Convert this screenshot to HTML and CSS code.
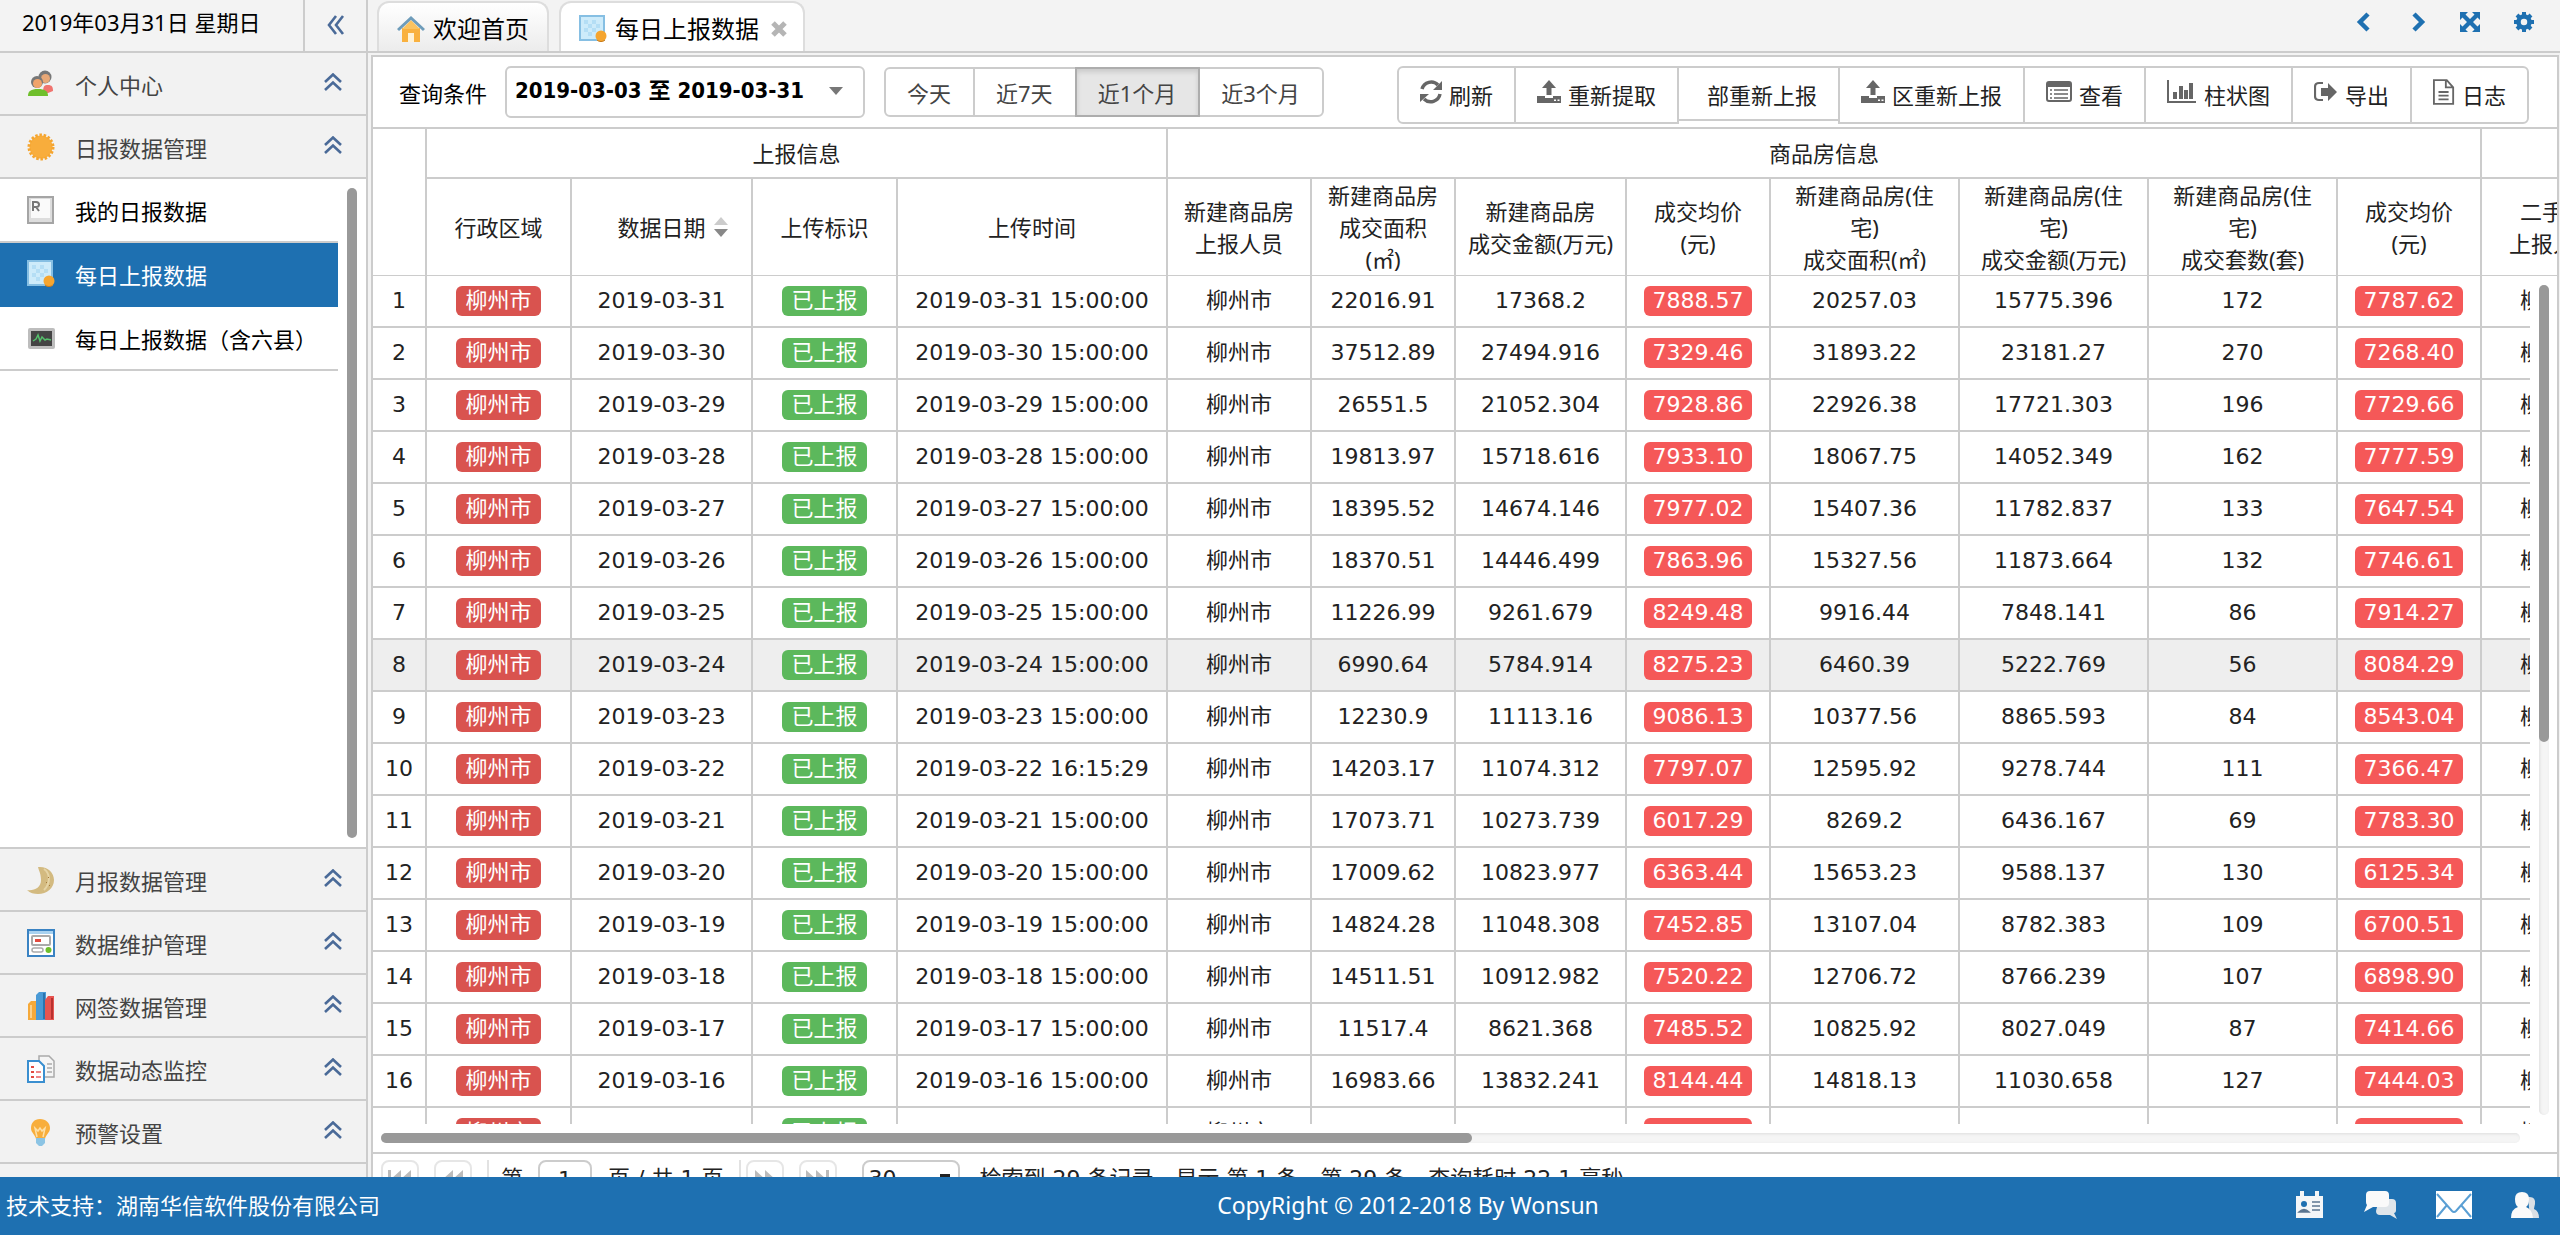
FILE: index.html
```html
<!DOCTYPE html>
<html lang="zh-CN">
<head>
    <meta charset="utf-8">
    <title>每日上报数据</title>
    <link rel="stylesheet" href="styles.css">
</head>
<body>
    <!-- shared icons -->
    <svg class="defs" aria-hidden="true">
        <symbol id="i-up" viewBox="0 0 18 18"><path d="M1 9 9 1.500 17 9M1 17 9 9.500 17 17" fill="none" stroke="#4a6a98" stroke-width="2.600"/></symbol>
        <symbol id="i-grid" viewBox="0 0 28 28"><path d="M1 1h24v24H1z" fill="#cdebfa" stroke="#86bfe3" stroke-width="2"/><path d="M5 5h4v4H5zm8 0h4v4h-4zM9 9h4v4H9zm8 0h4v4h-4zM5 13h4v4H5zm8 0h4v4h-4zM9 17h4v4H9z" fill="#b4def5"/><circle cx="22" cy="21" r="5.500" fill="#f5a52f"/><path d="M18 25c2 2 6 2 8 0" stroke="#c87a18" fill="none"/></symbol>
        <symbol id="i-upload" viewBox="0 0 24 24"><path d="M12 0 5 8h4.500v7h5V8H19zM0 16h8v2h8v-2h8v7H0z" fill="#666"/><path d="M17 19.500h2v1.500h-2zm3.500 0h2v1.500h-2z" fill="#fff"/></symbol>
    </svg>

    <div class="main">
        <aside class="sidebar">
            <div class="side-top">
                <span class="date">2019年03月31日 星期日</span>
                <button class="collapse" aria-label="收起">
                    <svg width="18" height="20" viewBox="0 0 18 20"><path d="M9 1 2 10l7 9M16 1l-7 9 7 9" fill="none" stroke="#4a6a98" stroke-width="2.600"/></svg>
                </button>
            </div>
            <button class="acc">
                <svg class="ico" viewBox="0 0 28 28"><path d="M16 24c0-8 1-9 5-9 4 0 5 2 5 6l-5 2z" fill="#f0746f"/><circle cx="18" cy="7" r="6.500" fill="#777"/><circle cx="18.500" cy="8.500" r="4.500" fill="#e8a877"/><circle cx="10" cy="12" r="6" fill="#777"/><circle cx="10.500" cy="13.500" r="4.500" fill="#f0a36b"/><path d="M1 26c0-5 3-7 10-7s10 2 10 7z" fill="#6fbf2c"/></svg>
                <span>个人中心</span><svg class="chev"><use href="#i-up"/></svg>
            </button>
            <button class="acc">
                <svg class="ico" viewBox="0 0 28 28"><circle cx="14" cy="14" r="11.500" fill="#f8ad3c"/><circle cx="14" cy="14" r="12" fill="none" stroke="#f5a52f" stroke-width="3" stroke-dasharray="2.500 1.700"/></svg>
                <span>日报数据管理</span><svg class="chev"><use href="#i-up"/></svg>
            </button>
            <div class="submenu">
                <nav>
                    <a href="#">
                        <svg class="ico" viewBox="0 0 28 28"><path d="M1 1h25v26H1z" fill="#ddd" stroke="#a5a5a5" stroke-width="2"/><path d="M4 3h19v19H4z" fill="#fafafa"/><path d="M6 15V6h3q3 0 3 2.500T9 11H6m3 0 3 4" fill="none" stroke="#777" stroke-width="2"/></svg>
                        <span>我的日报数据</span></a>
                    <a href="#" class="active"><svg class="ico"><use href="#i-grid"/></svg><span>每日上报数据</span></a>
                    <a href="#">
                        <svg class="ico" viewBox="0 0 28 28"><rect x="1" y="4" width="27" height="21" rx="2" fill="#bdbdbd"/><path d="M4 7h21v15H4z" fill="#444"/><path d="m6 17 3-2 2-4 2 6 2-4 3 3 2-1 4 1" fill="none" stroke="#55c06c" stroke-width="1.500"/></svg>
                        <span>每日上报数据（含六县）</span></a>
                </nav>
                <div class="side-scroll"></div>
            </div>
            <button class="acc">
                <svg class="ico" viewBox="0 0 28 28"><path d="M11 1c9-1 16 5 16 13S20 28 11 28c-4 0-8-1-11-4 7 1 14-2 14-10 0-6-2-9-3-13z" fill="#d3ba80"/><path d="M17 3c6 4 7 14 0 21" fill="none" stroke="#e6d4a5" stroke-width="2"/><path d="M21 11h1v1h-1zm-2 5h1v1h-1zm3 3h1v1h-1z" fill="#a3793a"/></svg>
                <span>月报数据管理</span><svg class="chev"><use href="#i-up"/></svg>
            </button>
            <button class="acc">
                <svg class="ico" viewBox="0 0 28 28"><path d="M1 1h26v26H1z" fill="#fff" stroke="#3a83c3" stroke-width="2"/><path d="M2 2h24v3H2z" fill="#a9d2f0"/><rect x="5" y="7" width="18" height="9" rx="1" fill="#fff" stroke="#aaa" stroke-width="2"/><path d="M8 10h6v3H8z" fill="#e24b40"/><rect x="5" y="19" width="11" height="4" rx="2" fill="#fff" stroke="#aaa" stroke-width="1.500"/><circle cx="21.500" cy="21" r="3" fill="#6fbf2c"/></svg>
                <span>数据维护管理</span><svg class="chev"><use href="#i-up"/></svg>
            </button>
            <button class="acc">
                <svg class="ico" viewBox="0 0 28 28"><path d="m1 12 3-3h6v19H1z" fill="#f5a93a"/><path d="m9 3 3-3h7v28H9z" fill="#4a9ad6"/><path d="M17 1v26" stroke="#2c74ae" stroke-width="2"/><path d="m18 8 3-4h6v24h-9z" fill="#e85450"/><path d="M25 6v21" stroke="#b8322f" stroke-width="2"/><path d="M4 13v13" stroke="#fbd08a" stroke-width="2"/></svg>
                <span>网签数据管理</span><svg class="chev"><use href="#i-up"/></svg>
            </button>
            <button class="acc">
                <svg class="ico" viewBox="0 0 28 28"><path d="M12 1h10l5 5v16H12z" fill="#f5f5f5" stroke="#aaa" stroke-width="1.500"/><path d="M20 9h5m-5 4h5m-5 4h5" stroke="#aaa" stroke-width="1.500"/><path d="M1 6h11l5 5v16H1z" fill="#fff" stroke="#3a8fd0" stroke-width="2"/><path d="M4 12h3m-3 5h3m-3 5h3" stroke="#e24b40" stroke-width="2"/><path d="M9 17h5m-5 5h5" stroke="#e88" stroke-width="2"/></svg>
                <span>数据动态监控</span><svg class="chev"><use href="#i-up"/></svg>
            </button>
            <button class="acc">
                <svg class="ico" viewBox="0 0 28 28"><path d="M13 1c6 0 10 4 10 9s-4 6-5 11H9C8 16 4 15 4 10s3-9 9-9z" fill="#f8ae3c"/><path d="m10 19-2-9 3 3 2-3 2 3 3-3-2 9" fill="none" stroke="#fde0a8" stroke-width="1.500"/><path d="M9 20h9v5l-3 3h-3l-3-3z" fill="#8cc4e4"/></svg>
                <span>预警设置</span><svg class="chev"><use href="#i-up"/></svg>
            </button>
            <div class="side-end"></div>
        </aside>

        <section class="content">
            <div class="tabs">
                <button class="tab">
                    <svg class="ico" viewBox="0 0 28 28"><path d="M5 13h18v14H5z" fill="#f9b13f"/><path d="m5 14 9-9 9 9z" fill="#fbc35f"/><path d="M1 15 14 3l13 12" fill="none" stroke="#6e9cba" stroke-width="3"/><path d="M11 18h6v9h-6z" fill="#fff2d5"/></svg>
                    <span>欢迎首页</span>
                </button>
                <button class="tab current">
                    <svg class="ico"><use href="#i-grid"/></svg>
                    <span>每日上报数据</span>
                    <svg class="close" width="16" height="16" viewBox="0 0 16 16"><path d="m2 2 12 12M14 2 2 14" stroke="#b5b5b5" stroke-width="5"/></svg>
                </button>
                <div class="tools">
                    <button aria-label="上一个"><svg width="14" height="20" viewBox="0 0 14 20"><path d="M12 2 4 10l8 8" fill="none" stroke="#1e70b1" stroke-width="4.500"/></svg></button>
                    <button aria-label="下一个"><svg width="14" height="20" viewBox="0 0 14 20"><path d="m2 2 8 8-8 8" fill="none" stroke="#1e70b1" stroke-width="4.500"/></svg></button>
                    <button aria-label="全屏"><svg width="20" height="20" viewBox="0 0 20 20"><path d="M0 0h8L5.500 2.500 10 7l4.500-4.500L12 0h8v8l-2.500-2.500L13 10l4.500 4.500L20 12v8h-8l2.500-2.500L10 13l-4.500 4.500L8 20H0v-8l2.500 2.500L7 10 2.500 5.500 0 8z" fill="#1e70b1"/></svg></button>
                    <button aria-label="设置"><svg width="20" height="20" viewBox="0 0 20 20"><circle cx="10" cy="10" r="5.500" fill="none" stroke="#1e70b1" stroke-width="4.500"/><path d="M10 0v4m0 12v4M0 10h4m12 0h4M3 3l3 3m8 8 3 3m0-14-3 3m-8 8-3 3" stroke="#1e70b1" stroke-width="4"/></svg></button>
                </div>
            </div>

            <div class="panel">
                <div class="toolbar">
                    <span class="lbl">查询条件</span>
                    <button class="range"><span>2019-03-03 至 2019-03-31</span><i class="caret"></i></button>
                    <div class="quick">
                        <button>今天</button>
                        <button>近7天</button>
                        <button class="on">近1个月</button>
                        <button>近3个月</button>
                    </div>
                    <div class="actions">
                        <button><svg width="22" height="24" viewBox="0 0 22 24"><path d="M2 9a9.500 9.500 0 0 1 16-4M20 14a9.500 9.500 0 0 1-16 5" fill="none" stroke="#666" stroke-width="3.500"/><path d="M22 1v9h-9zM0 22v-8h9z" fill="#666"/></svg>刷新</button>
                        <button><svg width="24" height="24"><use href="#i-upload"/></svg>重新提取</button>
                        <button class="noicon">部重新上报</button>
                        <button><svg width="24" height="24"><use href="#i-upload"/></svg>区重新上报</button>
                        <button><svg width="26" height="24" viewBox="0 0 26 24"><rect x="1" y="2" width="24" height="19" rx="2" fill="#fff" stroke="#666" stroke-width="2"/><path d="M1 2h24v5H1z" fill="#666"/><path d="M4 10h2m-2 4h2m-2 4h2M8 10h14M8 14h14M8 18h14" stroke="#666" stroke-width="1.700"/></svg>查看</button>
                        <button><svg width="30" height="24" viewBox="0 0 30 24"><path d="M1 0v22h28" fill="none" stroke="#666" stroke-width="2"/><path d="M6 12h4v7H6zm6-6h4v13h-4zm5 4h4v9h-4zm5-7h4v16h-4z" fill="#666"/></svg>柱状图</button>
                        <button><svg width="24" height="24" viewBox="0 0 24 24"><path d="M9 3H5Q1 3 1 7v9q0 4 4 4h4" fill="none" stroke="#666" stroke-width="2.200"/><path d="M14 3v5H7v8h7v5l9-9z" fill="#666"/></svg>导出</button>
                        <button><svg width="22" height="26" viewBox="0 0 24 28"><path d="M1 1h14l7 8v18H1zM14 1v8h8" fill="none" stroke="#666" stroke-width="2"/><path d="M6 14h11M6 18h11M6 22h11" stroke="#666" stroke-width="2"/></svg>日志</button>
                    </div>
                </div>

                <div class="head-wrap">
                    <table class="grid">
                        <colgroup class="cols"></colgroup>
                        <thead>
                            <tr class="group">
                                <th rowspan="2"></th>
                                <th colspan="4">上报信息</th>
                                <th colspan="8">商品房信息</th>
                                <th></th>
                            </tr>
                            <tr class="names">
                                <th>行政区域</th>
                                <th>数据日期<svg class="sort" viewBox="0 0 14 20"><path d="m7 0 7 8H0z" fill="#ccc"/><path d="m7 20 7-8H0z" fill="#888"/></svg></th>
                                <th>上传标识</th>
                                <th>上传时间</th>
                                <th>新建商品房<br>上报人员</th>
                                <th>新建商品房<br>成交面积<br>(㎡)</th>
                                <th>新建商品房<br>成交金额(万元)</th>
                                <th>成交均价<br>(元)</th>
                                <th>新建商品房(住<br>宅)<br>成交面积(㎡)</th>
                                <th>新建商品房(住<br>宅)<br>成交金额(万元)</th>
                                <th>新建商品房(住<br>宅)<br>成交套数(套)</th>
                                <th>成交均价<br>(元)</th>
                                <th>二手房<br>上报人员</th>
                            </tr>
                        </thead>
                    </table>
                </div>
                <div class="body-wrap">
                    <div class="rows">
                        <table class="grid">
                            <colgroup class="cols"></colgroup>
                            <tbody id="rows"></tbody>
                        </table>
                    </div>
                    <div class="vtrack"><div class="vthumb"></div></div>
                </div>
                <div class="htrack"><div class="hthumb"></div></div>

                <div class="pager">
                    <button aria-label="首页" class="pg"><svg width="24" height="18" viewBox="0 0 24 18"><path d="M0 0h3v18H0zM13 0v18L3 9zM23 0v18L13 9z" fill="#bbb"/></svg></button>
                    <button aria-label="上一页" class="pg"><svg width="20" height="18" viewBox="0 0 20 18"><path d="M10 0v18L0 9zM20 0v18L10 9z" fill="#bbb"/></svg></button>
                    <i class="sep"></i>
                    <label for="page">第</label>
                    <input type="text" id="page" value="1">
                    <span class="total">页 / 共 1 页</span>
                    <i class="sep"></i>
                    <button aria-label="下一页" class="pg"><svg width="20" height="18" viewBox="0 0 20 18"><path d="M0 0v18l10-9zM10 0v18l10-9z" fill="#bbb"/></svg></button>
                    <button aria-label="末页" class="pg"><svg width="24" height="18" viewBox="0 0 24 18"><path d="M0 0v18l10-9zM10 0v18l10-9zM20 0h3v18h-3z" fill="#bbb"/></svg></button>
                    <select aria-label="每页条数"><option>30</option></select>
                    <span>检索到 29 条记录，显示 第 1 条 - 第 29 条，查询耗时 22.1 毫秒</span>
                </div>
            </div>
        </section>
    </div>

    <footer>
        <span>技术支持：湖南华信软件股份有限公司</span>
        <span class="copy">CopyRight © 2012-2018 By Wonsun</span>
        <div class="links">
            <a href="#" aria-label="名片"><svg width="30" height="30" viewBox="0 0 30 30"><path d="M2 6h4V1h4v5h11V1h4v5h4v22H2z" fill="#f4f6f8"/><circle cx="10" cy="14" r="3" fill="#1e70b1"/><path d="M5 22q5-5 10 0zM18 12h8m-8 4h8m-8 4h8" stroke="#5b7590" stroke-width="1.500" fill="#5b7590"/></svg></a>
            <a href="#" aria-label="消息"><svg width="36" height="30" viewBox="0 0 36 30"><path d="M17 9h13q4 0 4 4v7q0 3-2 3l3 6-7-4H18q-4 0-4-4z" fill="#dfe5ea"/><path d="M8 1h15q4 0 4 4v8q0 4-4 4H11l-9 5 3-7q-1-1-1-3V5q0-4 4-4z" fill="#fafafa"/></svg></a>
            <a href="#" aria-label="邮件"><svg width="36" height="28" viewBox="0 0 36 28"><path d="M0 0h36v28H0z" fill="#fff"/><path d="m1 3 15 17q2 2 4 0L35 3M1 26l10-12M35 26 25 14" fill="none" stroke="#5a9fd4" stroke-width="2"/></svg></a>
            <a href="#" aria-label="用户"><svg width="30" height="30" viewBox="0 0 30 30"><path d="M18 7q8-1 7 7-1 4-1 5 5 2 5 9h-9z" fill="#d9dfe5"/><path d="M12 2q7 0 7 7 0 6-3 8 6 2 7 11H1q0-9 7-11-3-2-3-8 0-7 7-7z" fill="#fafafa"/></svg></a>
        </div>
    </footer>

    <script src="script.js"></script>
</body>
</html>
```
FILE: styles.css
```css
* {
    box-sizing: border-box;
}
body {
    margin: 0;
    height: 100vh;
    display: flex;
    flex-direction: column;
    overflow: hidden;
    font-family: "Noto Sans", "Noto Sans CJK SC", sans-serif;
    font-size: 22px;
    line-height: 32px;
    color: #222;
    background-color: #fff;
}
button, input, select {
    font: inherit;
    color: inherit;
    margin: 0;
    padding: 0;
    border: none;
    background: none;
    cursor: pointer;
}
a {
    color: inherit;
    text-decoration: none;
}
svg {
    flex: none;
}
.defs {
    position: absolute;
    width: 0;
    height: 0;
}
.ico {
    width: 28px;
    height: 28px;
}
.main {
    flex: 1;
    min-height: 0;
    display: flex;
}

/* sidebar */
.sidebar {
    flex: none;
    width: 368px;
    display: flex;
    flex-direction: column;
    border-right: 2px solid #ccc;
}
.side-top {
    height: 53px;
    display: flex;
    background-color: #f3f3f3;
    border-bottom: 2px solid #ccc;
}
.date {
    flex: 1;
    padding: 6px 0 0 22px;
    color: #000;
}
.collapse {
    width: 63px;
    border-left: 2px solid #ccc;
    padding-bottom: 8px;
}
.collapse svg {
    vertical-align: middle;
}
.acc {
    flex: none;
    height: 63px;
    padding: 0 24px 0 27px;
    display: flex;
    align-items: center;
    background-color: #f2f2f2;
    border-bottom: 2px solid #ccc;
    color: #444;
    text-align: left;
}
.acc span {
    flex: 1;
    padding: 2px 0 0 20px;
}
.chev {
    width: 18px;
    height: 18px;
    margin-bottom: 4px;
}
.submenu {
    flex: 1;
    min-height: 0;
    display: flex;
    border-bottom: 2px solid #ccc;
}
.submenu nav {
    width: 338px;
}
.submenu a {
    height: 64px;
    padding-left: 27px;
    display: flex;
    align-items: center;
    border-bottom: 2px solid #ccc;
    color: #000;
}
.submenu a span {
    padding: 2px 0 0 20px;
}
.submenu a.active {
    background-color: #1e70b1;
    border-color: #1e70b1;
    color: #fff;
}
.side-scroll {
    width: 10px;
    margin: 9px 0 9px 9px;
    border-radius: 5px;
    background-color: #999;
}
.side-end {
    height: 13px;
    background-color: #f2f2f2;
}

/* tabs */
.content {
    flex: 1;
    min-width: 0;
    display: flex;
    flex-direction: column;
    padding: 0 1px 0 3px;
    background-color: #f3f3f3;
}
.tabs {
    flex: none;
    height: 53px;
    margin: 0 -1px 2px -3px;
    padding: 1px 26px 0 9px;
    display: flex;
    gap: 10px;
    border-bottom: 2px solid #ccc;
}
.tab {
    display: flex;
    align-items: center;
    gap: 8px;
    height: 50px;
    padding: 4px 18px 0 18px;
    border: 2px solid #ddd;
    border-bottom: none;
    border-radius: 12px 12px 0 0;
    background: linear-gradient(#fff, #ececec);
    font-size: 24px;
    color: #000;
}
.tab.current {
    background: #fff;
    padding-right: 16px;
}
.close {
    margin-left: 4px;
}
.tools {
    margin-left: auto;
    display: flex;
    align-items: center;
    gap: 34px;
    height: 42px;
}
.tools button {
    display: flex;
}
.tools button:first-child {
    margin-right: 8px;
}

/* query panel */
.panel {
    flex: 1;
    min-height: 0;
    display: flex;
    flex-direction: column;
    border: 2px solid #ccc;
    border-bottom: none;
    background-color: #fff;
}
.toolbar {
    flex: none;
    height: 72px;
    padding: 9px 28px 0 26px;
    display: flex;
    align-items: flex-start;
    border-bottom: 2px solid #ccc;
}
.lbl {
    padding-top: 11px;
    color: #000;
}
.range {
    display: flex;
    align-items: center;
    justify-content: space-between;
    width: 360px;
    height: 52px;
    margin: 0 19px 0 18px;
    padding: 0 20px 2px 8px;
    border: 2px solid #ccc;
    border-radius: 6px;
    font-family: "DejaVu Sans Condensed", "DejaVu Sans", "Noto Sans CJK SC", sans-serif;
    font-weight: bold;
    color: #000;
}
.caret {
    border: 7px solid transparent;
    border-top: 8px solid #777;
    border-bottom: none;
}
.quick {
    display: flex;
    margin-top: 1px;
}
.quick button {
    height: 50px;
    padding: 2px 22px 0 21px;
    border: 2px solid #ccc;
    margin-left: -2px;
    color: #444;
}
.quick button:first-child {
    border-radius: 6px 0 0 6px;
    margin-left: 0;
}
.quick button:last-child {
    border-radius: 0 6px 6px 0;
}
.quick .on {
    position: relative;
    background-color: #e6e6e6;
    border-color: #adadad;
    box-shadow: inset 0 3px 5px rgba(0, 0, 0, 0.125);
}
.actions {
    margin-left: auto;
    display: flex;
    align-items: flex-start;
}
.actions button {
    display: flex;
    align-items: center;
    gap: 7px;
    height: 58px;
    padding: 0 21px;
    border: 2px solid #ccc;
    margin-left: -2px;
    white-space: nowrap;
}
.actions button:first-child {
    border-radius: 6px 0 0 6px;
}
.actions button:last-child {
    border-radius: 0 6px 6px 0;
}
.actions .noicon {
    height: 55px;
    padding: 3px 21px 0 28px;
}
.actions svg {
    margin-bottom: 6px;
}

/* data grid */
.grid {
    width: 2253px;
    table-layout: fixed;
    border-collapse: separate;
    border-spacing: 0;
    text-align: center;
}
.c54 { width: 54px; }
.c144 { width: 144px; }
.c145 { width: 145px; }
.c171 { width: 171px; }
.c181 { width: 181px; }
.c189 { width: 189px; }
.c270 { width: 270px; }
.grid th, .grid td {
    padding: 0;
    border-right: 2px solid #ccc;
    border-bottom: 2px solid #ccc;
    font-weight: normal;
    white-space: nowrap;
}
.head-wrap {
    flex: none;
    overflow: hidden;
}
.group th {
    height: 50px;
}
.names th {
    height: 97px;
    border-bottom-width: 1px;
}
.grid .group th:first-child {
    border-bottom-width: 1px;
}
.sort {
    width: 14px;
    height: 20px;
    margin: 0 -22px 0 8px;
    vertical-align: -1px;
}
.body-wrap {
    flex: 1;
    min-height: 0;
    display: flex;
}
.rows {
    flex: 1;
    min-width: 0;
    overflow: hidden;
    font-family: "DejaVu Sans", "Noto Sans CJK SC", sans-serif;
}
.rows td {
    height: 52px;
    line-height: 30px;
}
.rows .hover td {
    background-color: #eee;
}
.badge {
    display: inline-block;
    height: 30px;
    padding: 0 9px;
    border-radius: 6px;
    vertical-align: top;
    color: #fff;
}
.city { background-color: #d9534f; }
.done { background-color: #5cb85c; }
.price { background-color: #f55858; }
.vtrack {
    flex: none;
    width: 10px;
    margin: 9px 8px 9px 9px;
    border-radius: 5px;
    background-color: #f5f5f5;
    box-shadow: inset 1px 1px 3px #ddd;
}
.vthumb {
    height: 55%;
    border-radius: 5px;
    background-color: #999;
}
.htrack {
    flex: none;
    height: 10px;
    margin: 9px 37px 9px 8px;
    border-radius: 5px;
    background-color: #f5f5f5;
    box-shadow: inset 1px 1px 3px #ddd;
}
.hthumb {
    width: 51%;
    height: 100%;
    border-radius: 5px;
    background-color: #999;
}

/* pager */
.pager {
    flex: none;
    height: 25px;
    padding: 6px 0 0 8px;
    display: flex;
    align-items: flex-start;
    overflow: hidden;
    border-top: 2px solid #ccc;
    font-family: "DejaVu Sans", "Noto Sans CJK SC", sans-serif;
    white-space: nowrap;
}
.pager label, .pager span {
    padding-top: 3px;
}
.pg {
    width: 38px;
    height: 38px;
    flex: none;
    display: flex;
    align-items: center;
    justify-content: center;
    margin-right: 15px;
    border: 2px solid #e6e6e6;
    border-radius: 8px;
}
.sep {
    width: 2px;
    height: 38px;
    margin-right: 12px;
    background-color: #e2e2e2;
}
.total + .sep {
    margin: 0 5px 0 16px;
}
.pager input {
    width: 54px;
    height: 38px;
    margin: 0 16px 0 15px;
    border: 2px solid #ccc;
    border-radius: 8px;
    text-align: center;
}
.pager select {
    width: 98px;
    height: 38px;
    margin: 0 19px 0 10px;
    padding: 0 4px;
    border: 2px solid #ccc;
    border-radius: 8px;
    appearance: none;
    background: linear-gradient(#222, #222) 76px 12px / 10px 4px no-repeat;
}

/* footer */
footer {
    flex: none;
    height: 58px;
    padding-bottom: 2px;
    display: grid;
    grid-template-columns: 45% 20% 35%;
    align-items: center;
    background-color: #1e70b1;
    color: #fff;
}
footer > span:first-child {
    padding-left: 6px;
}
.copy {
    text-align: center;
    white-space: nowrap;
    font-size: 23px;
}
.links {
    display: flex;
    align-items: center;
    justify-content: flex-end;
    gap: 38px;
    padding-right: 20px;
}
.links a {
    display: flex;
}
```
FILE: script.js
```js
const widths = [54, 145, 181, 145, 270, 144, 144, 171, 144, 189, 189, 189, 144, 144];

// date, time, area, amount, price, house area, house amount, house count, house price
const data = [
    ['2019-03-31', '15:00:00', '22016.91', '17368.2', '7888.57', '20257.03', '15775.396', '172', '7787.62'],
    ['2019-03-30', '15:00:00', '37512.89', '27494.916', '7329.46', '31893.22', '23181.27', '270', '7268.40'],
    ['2019-03-29', '15:00:00', '26551.5', '21052.304', '7928.86', '22926.38', '17721.303', '196', '7729.66'],
    ['2019-03-28', '15:00:00', '19813.97', '15718.616', '7933.10', '18067.75', '14052.349', '162', '7777.59'],
    ['2019-03-27', '15:00:00', '18395.52', '14674.146', '7977.02', '15407.36', '11782.837', '133', '7647.54'],
    ['2019-03-26', '15:00:00', '18370.51', '14446.499', '7863.96', '15327.56', '11873.664', '132', '7746.61'],
    ['2019-03-25', '15:00:00', '11226.99', '9261.679', '8249.48', '9916.44', '7848.141', '86', '7914.27'],
    ['2019-03-24', '15:00:00', '6990.64', '5784.914', '8275.23', '6460.39', '5222.769', '56', '8084.29'],
    ['2019-03-23', '15:00:00', '12230.9', '11113.16', '9086.13', '10377.56', '8865.593', '84', '8543.04'],
    ['2019-03-22', '16:15:29', '14203.17', '11074.312', '7797.07', '12595.92', '9278.744', '111', '7366.47'],
    ['2019-03-21', '15:00:00', '17073.71', '10273.739', '6017.29', '8269.2', '6436.167', '69', '7783.30'],
    ['2019-03-20', '15:00:00', '17009.62', '10823.977', '6363.44', '15653.23', '9588.137', '130', '6125.34'],
    ['2019-03-19', '15:00:00', '14824.28', '11048.308', '7452.85', '13107.04', '8782.383', '109', '6700.51'],
    ['2019-03-18', '15:00:00', '14511.51', '10912.982', '7520.22', '12706.72', '8766.239', '107', '6898.90'],
    ['2019-03-17', '15:00:00', '11517.4', '8621.368', '7485.52', '10825.92', '8027.049', '87', '7414.66'],
    ['2019-03-16', '15:00:00', '16983.66', '13832.241', '8144.44', '14818.13', '11030.658', '127', '7444.03'],
    ['2019-03-15', '15:00:00', '16240.35', '12480.526', '7684.88', '14120.48', '10510.302', '121', '7443.30']
];

document.querySelectorAll('.cols').forEach(function(group) {
    group.innerHTML = widths.map(w => '<col class="c' + w + '">').join('');
});

document.getElementById('rows').innerHTML = data.map(function(d, i) {
    const cells = [
        i + 1,
        '<span class="badge city">柳州市</span>',
        d[0],
        '<span class="badge done">已上报</span>',
        d[0] + ' ' + d[1],
        '柳州市',
        d[2],
        d[3],
        '<span class="badge price">' + d[4] + '</span>',
        d[5],
        d[6],
        d[7],
        '<span class="badge price">' + d[8] + '</span>',
        '柳州市'
    ];
    return '<tr' + (i === 7 ? ' class="hover"' : '') + '>' + cells.map(c => '<td>' + c + '</td>').join('') + '</tr>';
}).join('');
```
